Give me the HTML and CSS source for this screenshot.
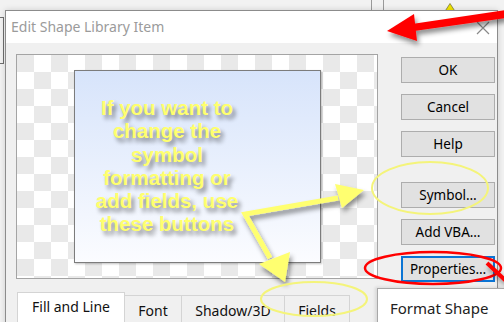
FILE: index.html
```html
<!DOCTYPE html>
<html lang="en">
<head>
  <meta charset="UTF-8" />
  <title>Edit Shape Library Item</title>
  <link rel="stylesheet" href="styles.css">
</head>
<body>
  <div class="desktop">
    <!-- bits of the main window behind the dialog -->
    <div class="back-panel"></div>
    <div class="back-rule rule-a"></div>
    <div class="back-rule rule-b"></div>
    <div class="back-dash"></div>
    <svg class="back-warn" width="10" height="8" viewBox="0 0 10 8">
      <polygon points="5,0.5 9.5,7.5 0.5,7.5" fill="#f3e600" stroke="#7a7a40" stroke-width="0.8"/>
    </svg>

    <div class="dialog">
      <div class="titlebar">
        <span class="title">Edit Shape Library Item</span>
        <svg class="close" width="14" height="14" viewBox="0 0 14 14">
          <path d="M1 1 L13 13 M13 1 L1 13" stroke="#8a8a8a" stroke-width="1.2"/>
        </svg>
      </div>
      <div class="body">
        <div class="preview">
          <div class="shape">
            <div class="shape-text">If you want to<br>change the<br>symbol<br>formatting or<br>add fields, use<br>these buttons</div>
          </div>
        </div>
        <div class="buttons">
          <button>OK</button>
          <button>Cancel</button>
          <button>Help</button>
          <button class="gap">Symbol…</button>
          <button>Add VBA…</button>
          <button class="focus">Properties…</button>
        </div>
      </div>
      <div class="tabs">
        <div class="tab active fill">Fill and Line</div>
        <div class="tab font">Font</div>
        <div class="tab shadow">Shadow/3D</div>
        <div class="tab fields">Fields</div>
      </div>
    </div>

    <div class="format-panel">Format Shape</div>

    <!-- hand drawn callouts on top of the screenshot -->
    <svg class="marks" width="504" height="322" viewBox="0 0 504 322">
      <defs>
        <filter id="shade" x="-20%" y="-20%" width="140%" height="160%">
          <feDropShadow dx="2" dy="4" stdDeviation="2.5" flood-color="#000" flood-opacity="0.45"/>
        </filter>
      </defs>
      <g filter="url(#shade)">
        <path d="M506 10 L412 24 L414 31 L506 18 Z" fill="#f00"/>
        <polygon points="387,31 414,14 417,41" fill="#f00"/>
      </g>
      <g filter="url(#shade)" fill="#ffff70" stroke="#ffff70">
        <polyline points="270,258 245,214 338,198" fill="none" stroke-width="5" stroke-linejoin="miter"/>
        <polygon points="335,184 364,190 342,208" stroke="none"/>
        <polygon points="259,264 290,252 285,282" stroke="none"/>
      </g>
      <ellipse cx="430" cy="188" rx="58" ry="26" fill="none" stroke="#f4f47a" stroke-width="2"/>
      <ellipse cx="314" cy="299" rx="53" ry="17" fill="none" stroke="#f4f47a" stroke-width="2"/>
      <ellipse cx="433" cy="268" rx="68" ry="16" fill="none" stroke="#f00" stroke-width="2.5"/>
      <path d="M487 263 L506 281" stroke="#f00" stroke-width="4" filter="url(#shade)"/>
    </svg>
  </div>
</body>
</html>
```
FILE: styles.css
```css
body {
  margin: 0;
  background: #f2f2f2;
  font-family: 'Noto Sans', sans-serif;
}
.desktop {
  position: relative;
  width: 504px;
  height: 322px;
  overflow: hidden;
  background: #f2f2f2;
}
.back-panel {
  position: absolute;
  left: -2px;
  top: 17px;
  width: 4px;
  height: 45px;
  border: 1px solid #6e6e6e;
}
.back-rule {
  position: absolute;
  top: 0;
  width: 1px;
  height: 10px;
  background: #9a9a9a;
}
.rule-a { left: 371px; }
.rule-b { left: 383px; }
.back-dash {
  position: absolute;
  left: 395px;
  top: 10px;
  width: 18px;
  height: 1px;
  background: #555;
}
.back-warn {
  position: absolute;
  left: 445px;
  top: 3px;
}
/* the dialog window */
.dialog {
  position: absolute;
  left: 5px;
  top: 10px;
  width: 491px;
  height: 330px;
  background: #f0f0f0;
  border: 1px solid #8c8c8c;
  box-shadow: 0 0 6px rgba(0, 0, 0, 0.15);
}
.titlebar {
  height: 32px;
  background: #fff;
  display: flex;
  align-items: center;
  justify-content: space-between;
  padding: 0 6px 0 5px;
}
.title {
  font-size: 14px;
  color: #9b9b9b;
  padding-bottom: 1px;
}
.close {
  margin-right: 1px;
  margin-top: 1px;
}
.body {
  display: flex;
  align-items: flex-start;
  height: 225px;
  padding: 11px 0 0 10px;
}
.preview {
  width: 360px;
  height: 223px;
  border: 1px solid #a4a4a4;
  background: repeating-conic-gradient(#fff 0 25%, #e9e9e9 0 50%) 0 0 / 34px 34px;
  display: flex;
  align-items: center;
  justify-content: center;
}
.shape {
  width: 245px;
  height: 191px;
  border: 1px solid #7c7c7c;
  background: linear-gradient(#d7e4fb, #fbfcff);
  box-shadow: 1px 1px 2px rgba(0, 0, 0, 0.25);
}
.shape-text {
  padding: 25px 60px 0 0;
  text-align: center;
  white-space: nowrap;
  font-family: 'Liberation Sans', Arial, sans-serif;
  font-weight: bold;
  font-size: 20.5px;
  line-height: 23.3px;
  color: #ffff6e;
  text-shadow: 3px 4px 4px rgba(0, 0, 0, 0.45);
}
.buttons {
  display: flex;
  flex-direction: column;
  gap: 11px;
  margin: 3px 0 0 23px;
}
button {
  width: 94px;
  height: 26px;
  background: #e1e1e1;
  border: 1px solid #adadad;
  font-family: 'Noto Sans', sans-serif;
  font-size: 13.5px;
  color: #000;
  padding: 0;
}
button.gap {
  margin-top: 14px;
}
button.focus {
  border: 2px solid #0a74d4;
}
.tabs {
  display: flex;
  align-items: flex-end;
  margin: 13px 0 0 11px;
}
.tab {
  height: 30px;
  border: 1px solid #d4d4d4;
  border-left: none;
  background: #f0f0f0;
  font-size: 14px;
  color: #111;
  display: flex;
  align-items: center;
  justify-content: center;
  box-sizing: border-box;
}
.tab.active {
  height: 33px;
  background: #fff;
  border-left: 1px solid #d4d4d4;
  padding-bottom: 4px;
}
.fill { width: 108px; }
.font { width: 57px; }
.shadow { width: 103px; }
.fields { width: 65px; }
.format-panel {
  position: absolute;
  left: 377px;
  top: 288px;
  width: 140px;
  height: 50px;
  background: #fff;
  border: 1px solid #a8a8a8;
  box-shadow: -2px -1px 3px rgba(0, 0, 0, 0.1);
  padding: 9px 0 0 12px;
  font-size: 15px;
  color: #222;
}
.marks {
  position: absolute;
  left: 0;
  top: 0;
  pointer-events: none;
}
```
